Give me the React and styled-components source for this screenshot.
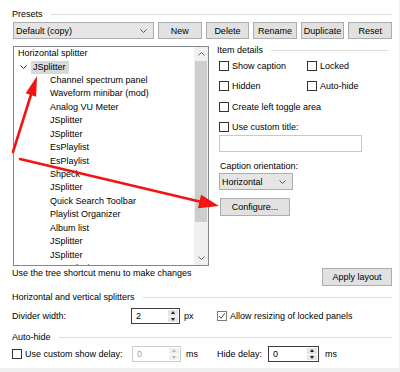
import React from 'react';
import styled, { createGlobalStyle } from 'styled-components';

const Global = createGlobalStyle`
  html, body { margin: 0; padding: 0; background: #f0f0f0; }
  body { font-family: "Liberation Sans", Arial, sans-serif; font-size: 9px; color: #000; }
  * { box-sizing: border-box; }
`;

const Window = styled.div`
  position: relative;
  width: 399px;
  height: 368px;
  background: #fff;
  padding: 8px 7px 0 12px;
  display: flex;
  flex-direction: column;
`;

const GroupHeader = styled.div`
  display: flex;
  align-items: center;
  gap: 8px;
  height: ${p => p.$h || 11}px;
  line-height: ${p => p.$h || 11}px;
  margin-top: ${p => p.$mt || 0}px;
  white-space: nowrap;
  &::after {
    content: '';
    flex: 1;
    height: 1px;
    background: #dcdcdc;
  }
`;

const PresetRow = styled.div`
  display: flex;
  gap: 4px;
  margin-top: 2px;
  height: 17px;
  padding-left: 1px;
`;

const Combo = styled.div`
  display: flex;
  align-items: center;
  justify-content: space-between;
  width: ${p => p.$w}px;
  height: 17px;
  background: #e5e5e5;
  border: 1px solid #adadad;
  padding: 0 6px 0 2px;
  margin-right: ${p => p.$mr || 0}px;
  margin-top: ${p => p.$mt || 0}px;
  flex: none;
`;

const Button = styled.div`
  display: flex;
  align-items: center;
  justify-content: center;
  flex: ${p => (p.$w ? 'none' : '1')};
  width: ${p => (p.$w ? `${p.$w}px` : 'auto')};
  height: ${p => p.$h || 17}px;
  background: #e1e1e1;
  border: 1px solid #adadad;
  margin-top: ${p => p.$mt || 0}px;
  margin-left: ${p => p.$ml || 0}px;
  white-space: nowrap;
`;

const Main = styled.div`
  display: grid;
  grid-template-columns: 197px 1fr;
  column-gap: 8px;
  margin-top: 7px;
  height: 220px;
`;

const Tree = styled.div`
  display: flex;
  height: 220px;
  margin-left: 1px;
  border: 1px solid #828790;
  background: #fff;
  overflow: hidden;
`;

const TreeList = styled.div`
  flex: 1;
  overflow: hidden;
  padding-left: 4px;
`;

const TreeRow = styled.div`
  display: flex;
  align-items: center;
  height: 13.45px;
  line-height: 13.45px;
  padding-left: ${p => (p.$level === 2 ? 32 : 0)}px;
  white-space: nowrap;
`;

const Expander = styled.span`
  display: inline-flex;
  align-items: center;
  width: 13px;
  padding-left: 2px;
`;

const Selected = styled.span`
  background: #d9d9d9;
  padding: 0 3px 0 2px;
  height: 13px;
  line-height: 13px;
`;

const ScrollBar = styled.div`
  width: 14px;
  background: #f0f0f0;
  display: flex;
  flex-direction: column;
`;

const ScrollArrow = styled.div`
  height: 14px;
  display: flex;
  align-items: center;
  justify-content: center;
  flex: none;
`;

const ScrollTrack = styled.div`
  flex: 1;
  padding: 0 1px;
`;

const Thumb = styled.div`
  height: 161px;
  background: #cdcdcd;
`;

const Details = styled.div`
  display: flex;
  flex-direction: column;
  padding-right: 4px;
`;

const Inner = styled.div`
  display: flex;
  flex-direction: column;
  padding-left: 2px;
`;

const CheckGrid = styled.div`
  display: grid;
  grid-template-columns: 88px auto;
  margin-top: ${p => p.$mt || 0}px;
`;

const CheckLabel = styled.label`
  display: inline-flex;
  align-items: center;
  gap: 3px;
  height: 12px;
  white-space: nowrap;
  margin-top: ${p => p.$mt || 0}px;
  width: ${p => (p.$w ? `${p.$w}px` : 'auto')};
  flex: none;
`;

const Box = styled.span`
  display: inline-flex;
  align-items: center;
  justify-content: center;
  width: 10px;
  height: 10px;
  border: 1px solid ${p => (p.$checked ? '#7a7a7a' : '#333')};
  background: #fff;
  flex: none;
`;

const TextInput = styled.div`
  width: 143px;
  height: 17px;
  border: 1px solid #c8c8c8;
  background: #fff;
  margin-top: 2px;
`;

const Caption = styled.div`
  height: 12px;
  line-height: 12px;
  margin-top: 8px;
  padding-left: 1px;
`;

const HintRow = styled.div`
  display: flex;
  justify-content: space-between;
  align-items: flex-start;
  margin-top: 2px;
  height: 18px;
  padding-right: 0;
`;

const Hint = styled.div`
  line-height: 11px;
`;

const FieldRow = styled.div`
  display: flex;
  align-items: center;
  height: 16px;
  margin-top: ${p => p.$mt || 0}px;
`;

const Half = styled.div`
  display: flex;
  align-items: center;
  width: 205px;
  flex: none;
`;

const FieldLabel = styled.span`
  width: ${p => p.$w}px;
  flex: none;
  white-space: nowrap;
`;

const Spin = styled.div`
  display: flex;
  width: ${p => p.$w}px;
  height: 16px;
  border: 1px solid ${p => (p.$disabled ? '#cccccc' : '#3c3c3c')};
  background: #fff;
  color: ${p => (p.$disabled ? '#a0a0a0' : '#000')};
  flex: none;
`;

const SpinValue = styled.span`
  flex: 1;
  padding-left: 4px;
  line-height: 14px;
`;

const SpinButtons = styled.div`
  width: 11px;
  display: flex;
  flex-direction: column;
  gap: 1px;
  padding: 1px 1px 1px 0;
`;

const SpinHalf = styled.div`
  flex: 1;
  background: ${p => (p.$disabled ? '#f0f0f0' : '#e5e5e5')};
  display: flex;
  align-items: center;
  justify-content: center;
`;

const Tri = styled.span`
  width: 0;
  height: 0;
  border-left: 2.5px solid transparent;
  border-right: 2.5px solid transparent;
  ${p => (p.$dir === 'up' ? 'border-bottom' : 'border-top')}: 3px solid ${p => (p.$disabled ? '#bcbcbc' : '#222')};
`;

const Unit = styled.span`
  margin-left: ${p => p.$ml}px;
  flex: none;
`;

const Overlay = styled.svg`
  position: absolute;
  left: 0;
  top: 0;
  pointer-events: none;
`;

const Chevron = ({ up, color = '#555' }) => (
  <svg width="7" height="4" viewBox="0 0 7 4">
    <polyline
      points={up ? '0.5,3.5 3.5,0.5 6.5,3.5' : '0.5,0.5 3.5,3.5 6.5,0.5'}
      fill="none"
      stroke={color}
      strokeWidth="1"
    />
  </svg>
);

const Check = ({ checked, children, w, mt }) => (
  <CheckLabel $w={w} $mt={mt}>
    <Box $checked={checked}>
      {checked && (
        <svg width="8" height="8" viewBox="0 0 8 8">
          <polyline points="1,4 3,6.3 7,1.2" fill="none" stroke="#444" strokeWidth="1" />
        </svg>
      )}
    </Box>
    {children}
  </CheckLabel>
);

const SpinBox = ({ w, value, disabled }) => (
  <Spin $w={w} $disabled={disabled}>
    <SpinValue>{value}</SpinValue>
    <SpinButtons>
      <SpinHalf $disabled={disabled}><Tri $dir="up" $disabled={disabled} /></SpinHalf>
      <SpinHalf $disabled={disabled}><Tri $dir="down" $disabled={disabled} /></SpinHalf>
    </SpinButtons>
  </Spin>
);

const children = [
  'Channel spectrum panel',
  'Waveform minibar (mod)',
  'Analog VU Meter',
  'JSplitter',
  'JSplitter',
  'EsPlaylist',
  'EsPlaylist',
  'Shpeck',
  'JSplitter',
  'Quick Search Toolbar',
  'Playlist Organizer',
  'Album list',
  'JSplitter',
  'JSplitter',
  'Artwork view',
];

const Arrow = ({ x1, y1, tip, a, b }) => (
  <g>
    <line x1={x1} y1={y1} x2={(a[0] + b[0]) / 2} y2={(a[1] + b[1]) / 2} stroke="#f21313" strokeWidth="2.6" strokeLinecap="round" />
    <polygon points={`${tip[0]},${tip[1]} ${a[0]},${a[1]} ${b[0]},${b[1]}`} fill="#f21313" />
  </g>
);

export default function App() {
  return (
    <>
      <Global />
      <Window>
        <GroupHeader $h={12}>Presets</GroupHeader>
        <PresetRow>
          <Combo $w={141}>
            <span>Default (copy)</span>
            <Chevron />
          </Combo>
          <Button>New</Button>
          <Button>Delete</Button>
          <Button>Rename</Button>
          <Button>Duplicate</Button>
          <Button>Reset</Button>
        </PresetRow>

        <Main>
          <Tree>
            <TreeList>
              <TreeRow $level={0}>Horizontal splitter</TreeRow>
              <TreeRow $level={1}>
                <Expander><Chevron color="#333" /></Expander>
                <Selected>JSplitter</Selected>
              </TreeRow>
              {children.map((c, i) => (
                <TreeRow key={i} $level={2}>{c}</TreeRow>
              ))}
            </TreeList>
            <ScrollBar>
              <ScrollArrow><Chevron up color="#606060" /></ScrollArrow>
              <ScrollTrack><Thumb /></ScrollTrack>
              <ScrollArrow><Chevron color="#606060" /></ScrollArrow>
            </ScrollBar>
          </Tree>

          <Details>
            <GroupHeader $h={8}>Item details</GroupHeader>
            <Inner>
              <CheckGrid $mt={6}>
                <Check>Show caption</Check>
                <Check>Locked</Check>
              </CheckGrid>
              <CheckGrid $mt={8}>
                <Check>Hidden</Check>
                <Check>Auto-hide</Check>
              </CheckGrid>
              <Check mt={9}>Create left toggle area</Check>
              <Check mt={8}>Use custom title:</Check>
              <TextInput />
              <Caption>Caption orientation:</Caption>
              <Combo $w={74} $mt={1}>
                <span>Horizontal</span>
                <Chevron />
              </Combo>
              <Button $w={70} $h={18} $mt={8} $ml={1}>Configure...</Button>
            </Inner>
          </Details>
        </Main>

        <HintRow>
          <Hint>Use the tree shortcut menu to make changes</Hint>
          <Button $w={70} $h={18}>Apply layout</Button>
        </HintRow>

        <GroupHeader $mt={6}>Horizontal and vertical splitters</GroupHeader>
        <FieldRow $mt={5}>
          <Half>
            <FieldLabel $w={119}>Divider width:</FieldLabel>
            <SpinBox w={49} value="2" />
            <Unit $ml={4}>px</Unit>
          </Half>
          <Check checked>Allow resizing of locked panels</Check>
        </FieldRow>

        <GroupHeader $mt={8}>Auto-hide</GroupHeader>
        <FieldRow $mt={3}>
          <Half>
            <Check w={120}>Use custom show delay:</Check>
            <SpinBox w={49} value="0" disabled />
            <Unit $ml={5}>ms</Unit>
          </Half>
          <FieldLabel $w={51}>Hide delay:</FieldLabel>
          <SpinBox w={51} value="0" />
          <Unit $ml={6}>ms</Unit>
        </FieldRow>

        <Overlay width="399" height="368" viewBox="0 0 399 368">
          <Arrow x1={13} y1={152} tip={[37, 76]} a={[36.1, 96.7]} b={[25.7, 93.3]} />
          <Arrow x1={20} y1={159} tip={[219, 206]} a={[197.9, 208.3]} b={[201.1, 194.7]} />
        </Overlay>
      </Window>
    </>
  );
}
